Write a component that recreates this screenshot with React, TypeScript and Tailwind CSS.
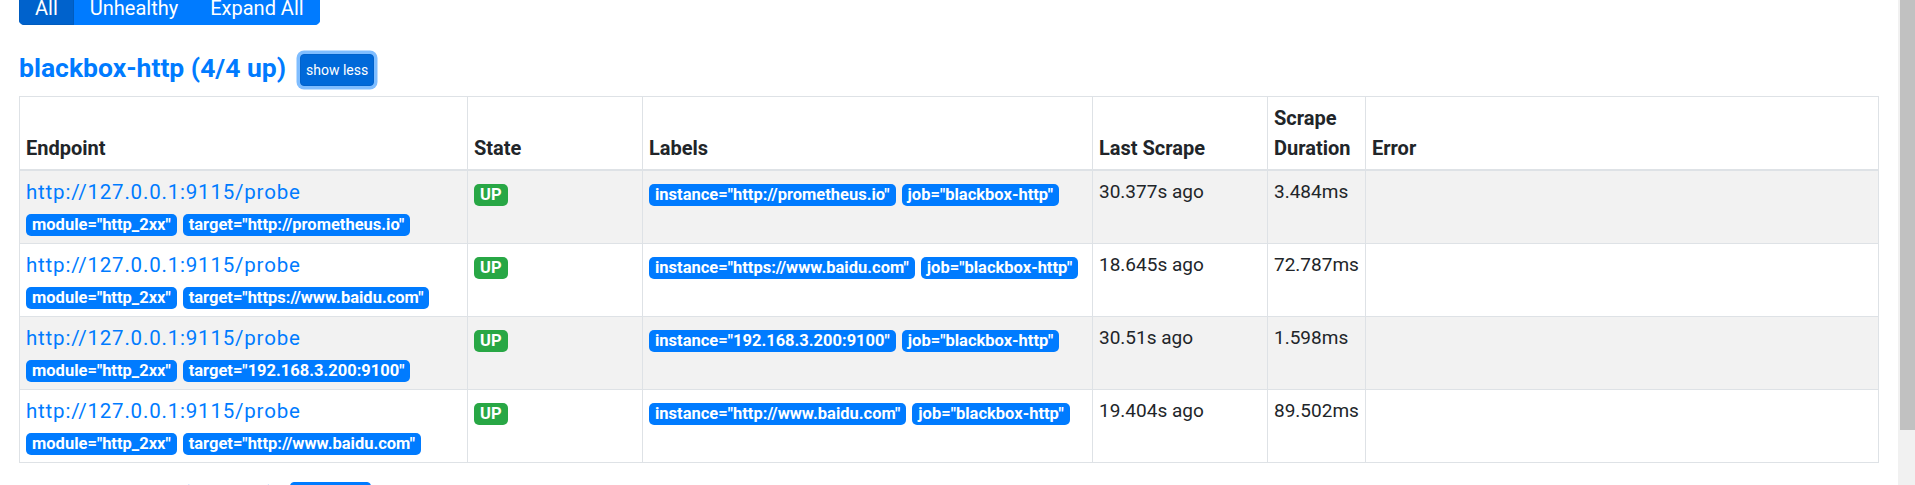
import type { ReactNode } from "react";

type Target = {
  target: string;
  lastScrape: string;
  duration: string;
};

const targets: Target[] = [
  { target: "http://prometheus.io", lastScrape: "30.377s ago", duration: "3.484ms" },
  { target: "https://www.baidu.com", lastScrape: "18.645s ago", duration: "72.787ms" },
  { target: "192.168.3.200:9100", lastScrape: "30.51s ago", duration: "1.598ms" },
  { target: "http://www.baidu.com", lastScrape: "19.404s ago", duration: "89.502ms" },
];

const ENDPOINT = "http://127.0.0.1:9115/probe";

function Badge({ children, className = "bg-[#007bff]" }: { children: ReactNode; className?: string }) {
  return (
    <span
      className={`inline-block h-[22px] rounded-[5px] px-[6px] text-[16.5px] font-bold leading-[22px] text-white whitespace-nowrap ${className}`}
    >
      {children}
    </span>
  );
}

// one line of badges, sitting on the text baseline like inline badges do
function BadgeLine({ children }: { children: ReactNode }) {
  return <div className="flex h-[30px] items-end gap-[6px] pb-[1px]">{children}</div>;
}

function Th({ children }: { children?: ReactNode }) {
  return (
    <th className="border border-b-2 border-[#dee2e6] px-[6px] py-[6px] text-left align-bottom text-[20px] font-bold">
      {children}
    </th>
  );
}

function Td({ children }: { children?: ReactNode }) {
  return <td className="border border-[#dee2e6] px-[6px] py-[6px] align-top text-[19px]">{children}</td>;
}

function Section({ job, up, total, focused, children }: {
  job: string;
  up: number;
  total: number;
  focused?: boolean;
  children?: ReactNode;
}) {
  return (
    <section>
      <div className="flex h-[32px] items-center">
        <h2 className="mb-[4px] text-[26.5px] font-bold leading-[30px] text-[#007bff]">
          {job} ({up}/{total} up)
        </h2>
        <button
          className={
            focused
              ? "ml-[14px] h-[32px] rounded-[4px] border border-[#0062cc] bg-[#0069d9] px-[5px] text-[14px] leading-[21px] text-white shadow-[0_0_0_3.5px_rgba(0,123,255,0.5)]"
              : "ml-[14px] h-[32px] rounded-[4px] border border-[#007bff] bg-[#007bff] px-[5px] text-[14px] leading-[21px] text-white"
          }
        >
          {focused ? "show less" : "show more"}
        </button>
      </div>
      {children}
    </section>
  );
}

export default function App() {
  return (
    <div className="flex h-[485px] overflow-hidden bg-white font-[Roboto,'Noto_Sans',sans-serif] text-[#212529]">
      <main className="min-w-0 flex-1 px-[19px]">
        {/* Filter buttons */}
        <div className="mt-[-22px] flex w-fit overflow-hidden rounded-[5px] text-[20px] leading-[30px] text-white">
          <button className="border border-[#005cbf] bg-[#0062cc] px-[15px] pt-[14px] pb-[1px]">All</button>
          <button className="border border-[#007bff] bg-[#007bff] px-[15px] pt-[14px] pb-[1px]">Unhealthy</button>
          <button className="border border-[#007bff] bg-[#007bff] px-[15px] pt-[14px] pb-[1px]">Expand All</button>
        </div>

        <div className="mt-[29px]">
          <Section job="blackbox-http" up={4} total={4} focused>
            <table className="mt-[10px] w-full table-fixed border-collapse border border-[#dee2e6] leading-[30px]">
              <colgroup>
                <col className="w-[448px]" />
                <col className="w-[175px]" />
                <col className="w-[450px]" />
                <col className="w-[175px]" />
                <col className="w-[98px]" />
                <col />
              </colgroup>
              <thead>
                <tr>
                  <Th>Endpoint</Th>
                  <Th>State</Th>
                  <Th>Labels</Th>
                  <Th>Last Scrape</Th>
                  <Th>Scrape Duration</Th>
                  <Th>Error</Th>
                </tr>
              </thead>
              <tbody>
                {targets.map((t, i) => (
                  <tr key={t.target} className={i % 2 === 0 ? "bg-[#f2f2f2]" : "bg-white"}>
                    <Td>
                      <a href="#" className="block text-[20.5px] tracking-[0.8px] text-[#007bff]">
                        {ENDPOINT}
                      </a>
                      <BadgeLine>
                        <Badge>module="http_2xx"</Badge>
                        <Badge>target="{t.target}"</Badge>
                      </BadgeLine>
                    </Td>
                    <Td>
                      <BadgeLine>
                        <Badge className="bg-[#28a745]">UP</Badge>
                      </BadgeLine>
                    </Td>
                    <Td>
                      <BadgeLine>
                        <Badge>instance="{t.target}"</Badge>
                        <Badge>job="blackbox-http"</Badge>
                      </BadgeLine>
                    </Td>
                    <Td>{t.lastScrape}</Td>
                    <Td>{t.duration}</Td>
                    <Td />
                  </tr>
                ))}
              </tbody>
            </table>
          </Section>
        </div>

        <div className="mt-[19px]">
          <Section job="blackbox-tcp" up={2} total={2} />
        </div>
      </main>

      {/* Window scrollbar */}
      <div className="w-[17px] shrink-0 bg-[#f1f1f1] pl-[2px]">
        <div className="h-[430px] bg-[#c1c1c1]" />
      </div>
    </div>
  );
}
